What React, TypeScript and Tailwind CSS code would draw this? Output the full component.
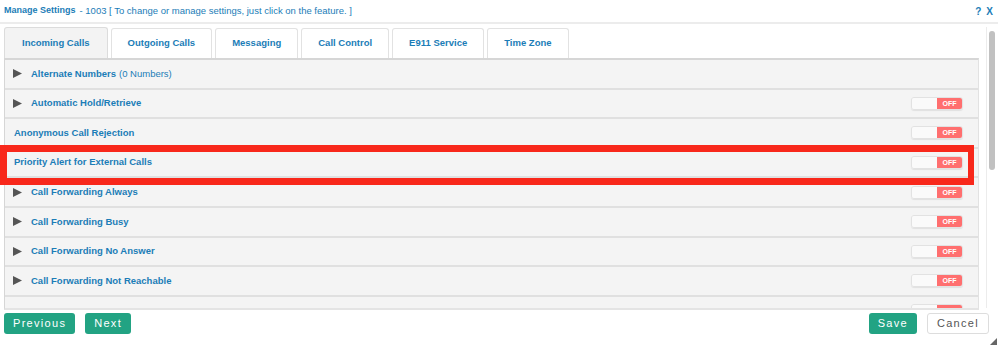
import React from "react";

const TABS = [
  "Incoming Calls",
  "Outgoing Calls",
  "Messaging",
  "Call Control",
  "E911 Service",
  "Time Zone",
];

type Feature = {
  label: string;
  note?: string;
  expandable: boolean;
  toggle: boolean;
};

const FEATURES: Feature[] = [
  { label: "Alternate Numbers", note: "(0 Numbers)", expandable: true, toggle: false },
  { label: "Automatic Hold/Retrieve", expandable: true, toggle: true },
  { label: "Anonymous Call Rejection", expandable: false, toggle: true },
  { label: "Priority Alert for External Calls", expandable: false, toggle: true },
  { label: "Call Forwarding Always", expandable: true, toggle: true },
  { label: "Call Forwarding Busy", expandable: true, toggle: true },
  { label: "Call Forwarding No Answer", expandable: true, toggle: true },
  { label: "Call Forwarding Not Reachable", expandable: true, toggle: true },
  // next row is scrolled mostly out of view, only its switch peeks in
  { label: "", expandable: false, toggle: true },
];

function Toggle() {
  return (
    <div className="flex h-[13px] w-[52px] overflow-hidden rounded-[3px] border border-[#e2e2e2] shadow-[0_1px_1px_rgba(0,0,0,0.08)]">
      <div className="w-[25px] bg-[#fafafa]" />
      <div className="flex flex-1 items-center justify-center bg-[#ff6f6f] text-[7px] font-bold leading-none text-white">
        OFF
      </div>
    </div>
  );
}

function FeatureRow({ f }: { f: Feature }) {
  return (
    <div className="flex h-[29.6px] shrink-0 items-center border-b-2 border-[#e0e0e0] bg-[#f4f4f4] pr-[15px]">
      {f.expandable ? (
        <svg width="9" height="9" viewBox="0 0 9 9" className="ml-[8px] mr-[9px] shrink-0">
          <path d="M0 0 L9 4.5 L0 9 Z" fill="#555" />
        </svg>
      ) : (
        <span className="w-[9px]" />
      )}
      {f.label && <span className="text-[9.5px] font-bold text-[#1b7db7]">{f.label}</span>}
      {f.note && <span className="ml-[3px] text-[9.5px] text-[#1b7db7]">{f.note}</span>}
      <div className="flex-1" />
      {f.toggle && <Toggle />}
    </div>
  );
}

export default function App() {
  return (
    <div
      className="relative h-[346px] w-[998px] overflow-hidden bg-white"
      style={{ fontFamily: '"Liberation Sans", Arial, sans-serif' }}
    >
      {/* Title bar */}
      <div className="flex h-[24px] items-center border-b-2 border-[#ececec] pl-[4px] pr-[4px]">
        <span className="text-[9px] font-bold text-[#1b7db7]">Manage Settings</span>
        <span className="ml-[4px] text-[9.5px] text-[#1b7db7]">
          - 1003 [ To change or manage settings, just click on the feature. ]
        </span>
        <div className="flex-1" />
        <span className="mr-[5px] text-[10px] font-bold text-[#1b7db7]">?</span>
        <span className="mr-[1px] text-[10px] font-bold text-[#1b7db7]">X</span>
      </div>

      <div className="flex">
        <div className="ml-[4px] flex w-[975px] flex-col">
          {/* Tabs */}
          <div className="mt-[4px] flex h-[30px] items-end gap-[3px]">
            {TABS.map((t, i) => (
              <div
                key={t}
                className={
                  i === 0
                    ? "flex h-[31px] items-center rounded-t-[3px] border border-b-0 border-[#dcdcdc] bg-[#f3f3f3] px-[17px] text-[9.5px] font-bold text-[#1b7db7]"
                    : "flex h-[30px] items-center rounded-t-[3px] border border-b-0 border-[#e2e2e2] bg-white px-[16px] text-[9.5px] font-bold text-[#1b7db7]"
                }
              >
                {t}
              </div>
            ))}
          </div>

          {/* Feature list */}
          <div className="flex h-[252px] flex-col overflow-hidden border-x border-t-2 border-b-2 border-[#d6d6d6] border-r-[#e2e2e2] border-b-[#e4e4e4] bg-[#f4f4f4]">
            {FEATURES.map((f, i) => (
              <FeatureRow key={i} f={f} />
            ))}
          </div>
        </div>

        {/* Scrollbar */}
        <div className="ml-[7px] mt-[3px] flex h-[281px] w-[11px] justify-center border-l border-[#ececec] pt-[4px]">
          <div className="h-[139px] w-[6px] rounded-[3px] bg-[#c1c1c1]" />
        </div>
      </div>

      {/* Footer */}
      <div className="mt-[3px] flex items-center px-[4px]">
        <button className="h-[21px] rounded-[3px] bg-[#22a383] px-[9px] text-[11px] tracking-[1.3px] text-white">
          Previous
        </button>
        <button className="ml-[10px] h-[21px] rounded-[3px] bg-[#22a383] px-[9px] text-[11px] tracking-[1.3px] text-white">
          Next
        </button>
        <div className="flex-1" />
        <button className="h-[21px] rounded-[3px] bg-[#22a383] px-[9px] text-[11px] tracking-[1.3px] text-white">
          Save
        </button>
        <button className="ml-[10px] mr-[5px] h-[21px] rounded-[3px] border border-[#dddddd] bg-white px-[9px] text-[11px] tracking-[1.3px] text-[#555]">
          Cancel
        </button>
      </div>

      {/* Resize grip */}
      <svg width="7" height="7" viewBox="0 0 7 7" className="absolute bottom-[1px] right-[1px]">
        <path d="M7 0 L7 7 L0 7 Z" fill="#666" />
      </svg>

      {/* Annotation highlight */}
      <div className="pointer-events-none absolute left-0 top-[145px] h-[40px] w-[974px] border-[7px] border-r-[6px] border-[#f8281b]" />
    </div>
  );
}
